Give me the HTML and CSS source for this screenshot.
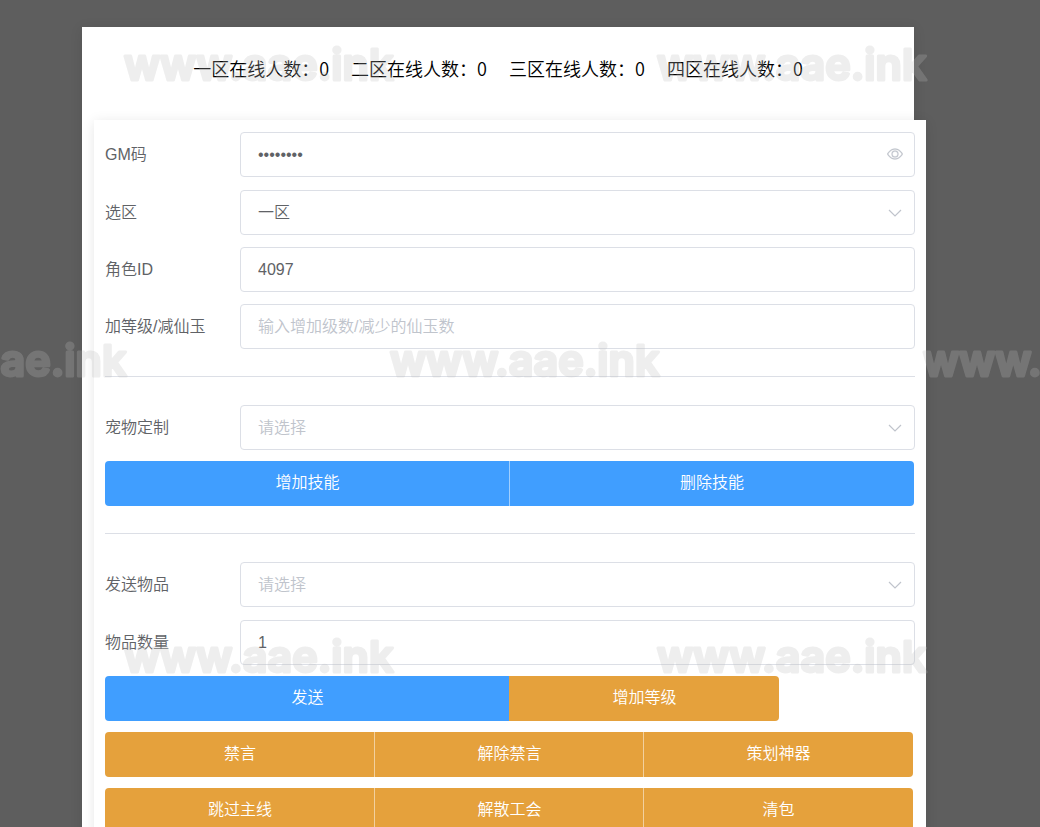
FILE: index.html
```html
<!DOCTYPE html>
<html lang="zh-CN">
<head>
<meta charset="utf-8">
<meta name="viewport" content="width=device-width, initial-scale=1">
<title>GM</title>
<link rel="stylesheet" href="styles.css">
</head>
<body>
<main class="panel">
  <header class="online">
    <span>一区在线人数：0</span>
    <span>二区在线人数：0</span>
    <span>三区在线人数：0</span>
    <span>四区在线人数：0</span>
  </header>
  <form class="card">
    <div class="fields">
      <div class="row">
        <label for="gm">GM码</label>
        <div class="field">
          <input class="control" id="gm" type="password" value="12345678">
          <button class="icon icon-button" type="button" aria-label="显示密码">
            <svg viewBox="0 0 1024 1024" width="16" height="16" fill="currentColor" stroke="currentColor" stroke-width="16"><path d="M512 160c320 0 512 352 512 352S832 864 512 864 0 512 0 512s192-352 512-352zm0 64c-225 0-384 208-436 288 52 80 211 288 436 288 226 0 384-208 436-288-52-80-211-288-436-288zm0 64a224 224 0 1 1 0 448 224 224 0 0 1 0-448zm0 64a160 160 0 1 0 0 320 160 160 0 0 0 0-320z"/></svg>
          </button>
        </div>
      </div>
      <div class="row">
        <label for="zone">选区</label>
        <div class="field">
          <select class="control" id="zone"><option>一区</option><option>二区</option><option>三区</option><option>四区</option></select>
          <svg class="icon" viewBox="0 0 16 16" width="16" height="16"><path d="M2 6l6 6 6-6" fill="none" stroke="currentColor" stroke-width="1.2"/></svg>
        </div>
      </div>
      <div class="row">
        <label for="role">角色ID</label>
        <div class="field"><input class="control" id="role" type="text" value="4097"></div>
      </div>
      <div class="row">
        <label for="level">加等级/减仙玉</label>
        <div class="field"><input class="control" id="level" type="text" placeholder="输入增加级数/减少的仙玉数"></div>
      </div>
    </div>
    <hr class="divider">
    <div class="fields">
      <div class="row">
        <label for="pet">宠物定制</label>
        <div class="field">
          <select class="control is-empty" id="pet"><option>请选择</option></select>
          <svg class="icon" viewBox="0 0 16 16" width="16" height="16"><path d="M2 6l6 6 6-6" fill="none" stroke="currentColor" stroke-width="1.2"/></svg>
        </div>
      </div>
    </div>
    <div class="actions">
      <button class="btn primary half" type="button">增加技能</button>
      <button class="btn primary half" type="button">删除技能</button>
    </div>
    <hr class="divider">
    <div class="fields fields-items">
      <div class="row">
        <label for="item">发送物品</label>
        <div class="field">
          <select class="control is-empty" id="item"><option>请选择</option></select>
          <svg class="icon" viewBox="0 0 16 16" width="16" height="16"><path d="M2 6l6 6 6-6" fill="none" stroke="currentColor" stroke-width="1.2"/></svg>
        </div>
      </div>
      <div class="row">
        <label for="count">物品数量</label>
        <div class="field"><input class="control" id="count" type="text" value="1"></div>
      </div>
    </div>
    <div class="actions">
      <button class="btn primary half" type="button">发送</button>
      <button class="btn warning third" type="button">增加等级</button>
    </div>
    <div class="actions">
      <button class="btn warning third" type="button">禁言</button>
      <button class="btn warning third" type="button">解除禁言</button>
      <button class="btn warning third" type="button">策划神器</button>
    </div>
    <div class="actions">
      <button class="btn warning third" type="button">跳过主线</button>
      <button class="btn warning third" type="button">解散工会</button>
      <button class="btn warning third" type="button">清包</button>
    </div>
  </form>
</main>
<svg class="watermarks" aria-hidden="true">
  <text x="124" y="80">www.aae.ink</text>
  <text x="657" y="80">www.aae.ink</text>
  <text x="-143" y="376">www.aae.ink</text>
  <text x="390" y="376">www.aae.ink</text>
  <text x="923" y="376">www.aae.ink</text>
  <text x="124" y="672">www.aae.ink</text>
  <text x="657" y="672">www.aae.ink</text>
</svg>
</body>
</html>
```
FILE: styles.css
```css
* { box-sizing: border-box; }
html { scrollbar-width: none; }
body {
  margin: 0;
  padding-top: 27px;
  background: #5e5e5e;
  color: #606266;
  font: 16px/24px "Liberation Sans", "Noto Sans CJK SC", sans-serif;
}
.panel {
  width: 80%;
  margin-left: 82px;
  background: #fff;
  box-shadow: 0 2px 12px rgba(0, 0, 0, .1);
}
.online {
  display: flex;
  justify-content: center;
  gap: 22px;
  padding: 28px 0 38px;
  color: #000;
  font: 350 18px/27px "Noto Sans CJK SC", sans-serif;
  white-space: nowrap;
}
.card {
  width: 100%;
  margin-left: 12px;
  padding: 12px 11px 11px;
  background: #fff;
  box-shadow: 0 2px 12px rgba(0, 0, 0, .1);
}
.fields { display: grid; gap: 12px; }
.fields-items { gap: 13px; }
.row { display: grid; grid-template-columns: 1fr 5fr; align-items: center; }
.row label { font-weight: 350; }
.field { position: relative; }
.control {
  display: block;
  appearance: none;
  width: 100%;
  height: 45px;
  padding: 0 40px 0 17px;
  border: 1px solid #dcdfe6;
  border-radius: 4px;
  outline: 0;
  background: #fff;
  color: #606266;
  font: inherit;
  font-weight: 350;
}
.control::placeholder { color: #c0c4cc; opacity: 1; }
.control.is-empty { color: #c0c4cc; }
.icon {
  position: absolute;
  top: 14px;
  right: 12px;
  width: 16px;
  height: 16px;
  color: #c0c4cc;
  pointer-events: none;
}
.icon-button { padding: 0; border: 0; background: none; pointer-events: auto; }
.icon-button svg { display: block; }
.divider { height: 1px; margin: 27px 0 28px; border: 0; background: #dcdfe6; }
.actions { display: flex; margin-top: 11px; }
.btn {
  height: 45px;
  padding: 0 0 1px;
  border: 0;
  color: #fff;
  font: inherit;
  font-weight: 350;
  cursor: pointer;
}
.btn + .btn { margin-left: -1px; border-left: 1px solid rgba(255, 255, 255, .5); }
.btn:first-child { border-radius: 4px 0 0 4px; }
.btn:last-child { border-radius: 0 4px 4px 0; }
.primary { background: #409eff; }
.warning { background: #e5a13c; }
.primary + .warning { border-left-color: transparent; }
.half { width: 50%; }
.third { width: calc(100% / 3); }
.watermarks {
  position: fixed;
  inset: 0;
  width: 100%;
  height: 100%;
  opacity: .25;
  pointer-events: none;
  fill: #bcbcbc;
  stroke: #bcbcbc;
  stroke-width: 3px;
  stroke-linejoin: round;
  font: 600 43px Inter, sans-serif;
}
.fields:first-child { grid-template-rows: 46px; }
.fields:first-child .row { align-items: start; }
.fields:first-child label { line-height: 45px; }
```
